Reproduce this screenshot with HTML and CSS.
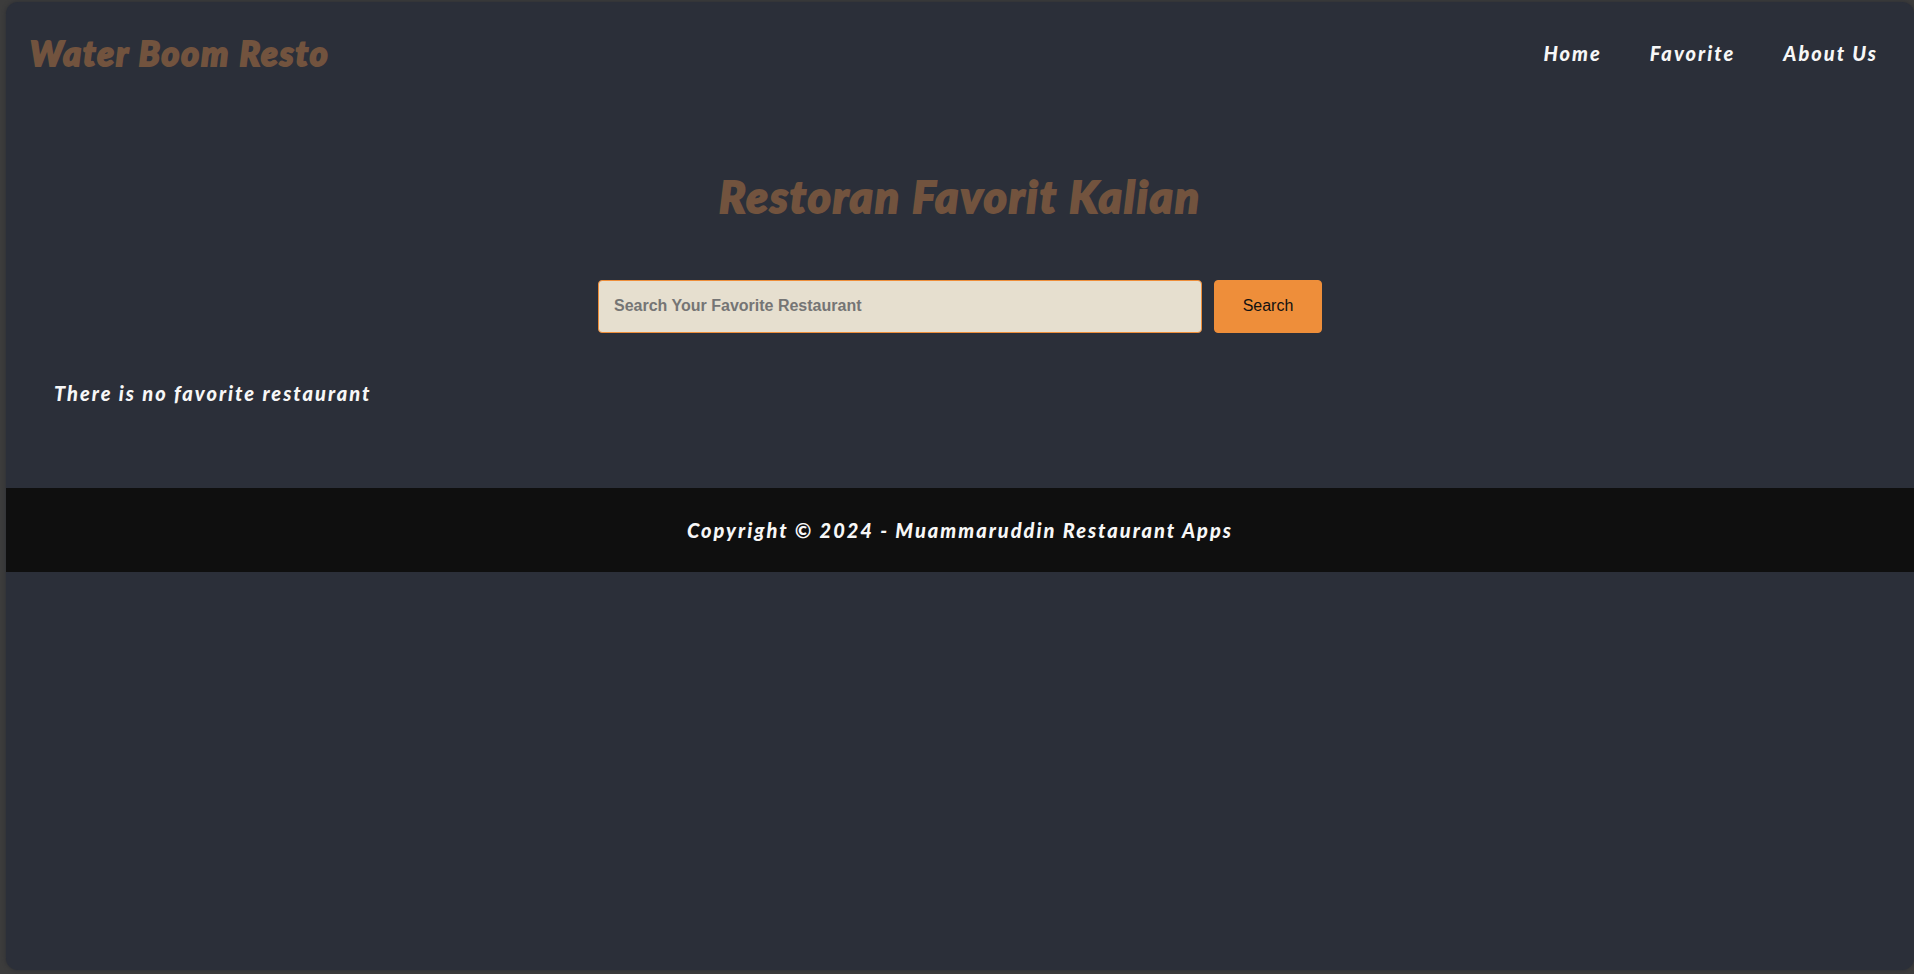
FILE: index.html
```html
<!DOCTYPE html>
<html lang="en">
<head>
<meta charset="utf-8">
<meta name="viewport" content="width=device-width, initial-scale=1">
<title>Water Boom Resto</title>
<link rel="stylesheet" href="styles.css">
</head>
<body>
<div class="page">
  <header class="header">
    <a class="brand" href="#">Water Boom Resto</a>
    <nav class="nav" aria-label="Main">
      <a class="nav-link" href="#">Home</a>
      <a class="nav-link" href="#">Favorite</a>
      <a class="nav-link" href="#">About Us</a>
    </nav>
  </header>
  <main class="main">
    <h1 class="title">Restoran Favorit Kalian</h1>
    <form class="search">
      <input class="search-input" type="search" aria-label="Search Your Favorite Restaurant" placeholder="Search Your Favorite Restaurant">
      <button class="search-button" type="button">Search</button>
    </form>
    <p class="empty">There is no favorite restaurant</p>
  </main>
  <footer class="footer">
    <p class="copyright">Copyright © 2024 - Muammaruddin Restaurant Apps</p>
  </footer>
</div>
</body>
</html>
```
FILE: styles.css
```css
* {
  box-sizing: border-box;
}

body {
  margin: 0;
  min-height: 100vh;
  display: flex;
  padding: 2px 0 4px 6px;
  background: #3c3c3c;
  color: #f7f7f7;
  font-family: Lato, "Open Sans", sans-serif;
  font-size: 20px;
  font-style: italic;
  font-weight: 900;
  line-height: 24px;
  letter-spacing: 2px;
}

.page {
  flex: 1;
  min-width: 0;
  border-radius: 12px;
  overflow: hidden;
  background: #2b2f39;
  box-shadow: 0 0 4px #2b2d33;
}

.header {
  display: flex;
  flex-wrap: wrap;
  align-items: center;
  justify-content: space-between;
  gap: 16px;
  padding: 30px 36px 30px 24px;
}

.brand {
  color: #72533e;
  font-size: 34px;
  line-height: 42px;
  text-decoration: none;
  -webkit-text-stroke: 2px #72533e;
}

.nav {
  display: flex;
  flex-wrap: wrap;
  gap: 48px;
}

.nav-link {
  color: inherit;
  text-decoration: none;
}

.main {
  padding: 62px 48px 83px;
}

.title {
  margin: 0;
  color: #72533e;
  font-size: 44px;
  font-weight: 900;
  line-height: 60px;
  text-align: center;
  -webkit-text-stroke: 2px #72533e;
}

.search {
  display: flex;
  justify-content: center;
  gap: 12px;
  margin: 54px auto 48px;
}

.search-input,
.search-button {
  height: 53px;
  border: 1px solid #ee8e3a;
  border-radius: 4px;
  font-family: "Liberation Sans", Arial, sans-serif;
  font-size: 16px;
}

.search-input {
  width: 604px;
  min-width: 0;
  padding: 0 15px 2px;
  background: #e6dfcf;
  color: #222222;
  font-weight: 700;
  appearance: none;
}

.search-input::placeholder {
  color: #757575;
}

.search-button {
  width: 108px;
  padding: 0 0 2px;
  background: #ee8e3a;
  color: #111111;
}

.empty {
  margin: 0;
}

.footer {
  padding: 30px 24px;
  background: #0f0f0f;
  text-align: center;
}

.copyright {
  margin: 0;
}
```
